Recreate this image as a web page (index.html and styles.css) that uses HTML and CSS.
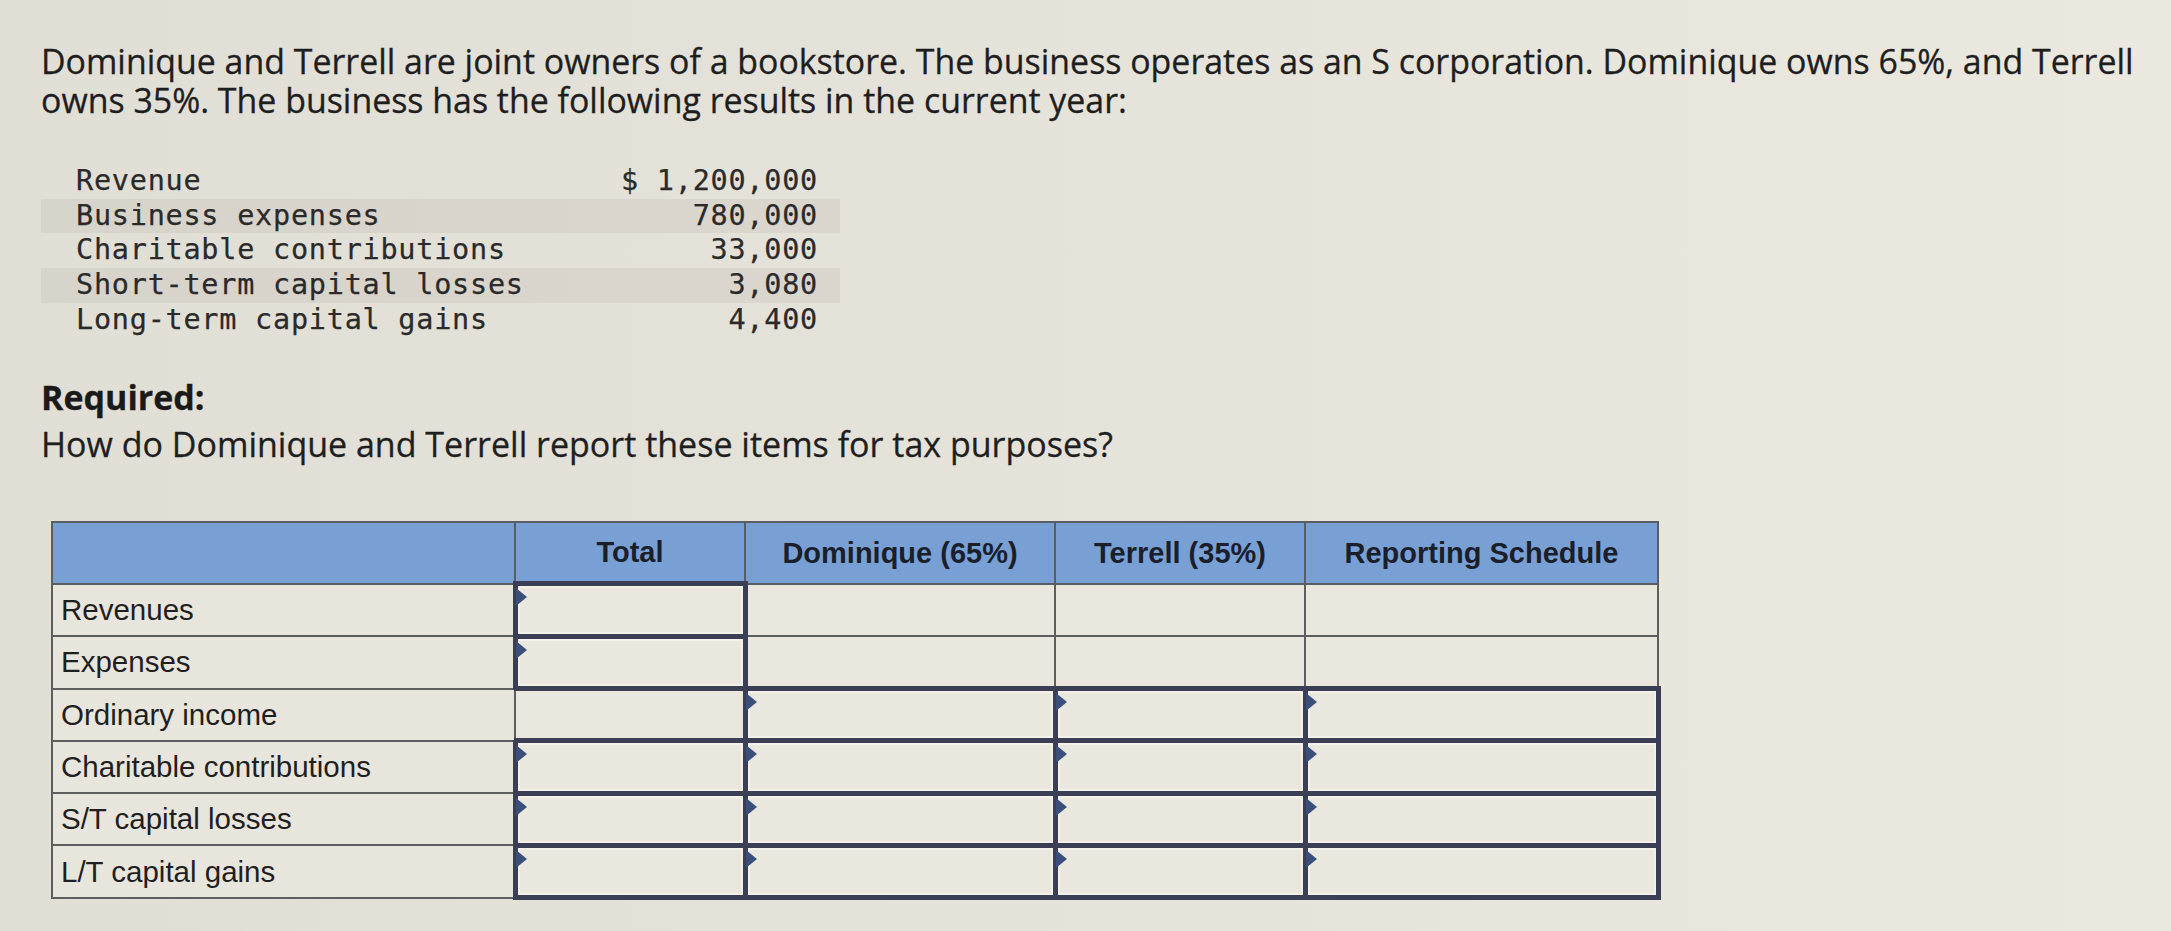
FILE: index.html
```html
<!DOCTYPE html>
<html>
<head>
<meta charset="utf-8">
<link rel="stylesheet" href="styles.css">
</head>
<body>
<div class="page">
  <p class="intro">Dominique and Terrell are joint owners of a bookstore. The business operates as an S corporation. Dominique owns 65%, and Terrell owns 35%. The business has the following results in the current year:</p>

  <div class="data">
    <div class="drow"><span class="dlabel">Revenue</span><span class="dval">$ 1,200,000</span></div>
    <div class="drow stripe"><span class="dlabel">Business expenses</span><span class="dval">780,000</span></div>
    <div class="drow"><span class="dlabel">Charitable contributions</span><span class="dval">33,000</span></div>
    <div class="drow stripe"><span class="dlabel">Short-term capital losses</span><span class="dval">3,080</span></div>
    <div class="drow"><span class="dlabel">Long-term capital gains</span><span class="dval">4,400</span></div>
  </div>

  <div class="required">
    <div class="req-title">Required:</div>
    <div class="req-text">How do Dominique and Terrell report these items for tax purposes?</div>
  </div>

  <table class="answer">
    <colgroup>
      <col class="c-label">
      <col class="c-total">
      <col class="c-dom">
      <col class="c-ter">
      <col class="c-rep">
    </colgroup>
    <thead>
      <tr>
        <th></th>
        <th>Total</th>
        <th>Dominique (65%)</th>
        <th>Terrell (35%)</th>
        <th>Reporting Schedule</th>
      </tr>
    </thead>
    <tbody>
      <tr>
        <td class="label">Revenues</td>
        <td class="in"></td>
        <td></td>
        <td></td>
        <td></td>
      </tr>
      <tr>
        <td class="label">Expenses</td>
        <td class="in"></td>
        <td></td>
        <td></td>
        <td></td>
      </tr>
      <tr>
        <td class="label">Ordinary income</td>
        <td></td>
        <td class="in"></td>
        <td class="in"></td>
        <td class="in"></td>
      </tr>
      <tr>
        <td class="label">Charitable contributions</td>
        <td class="in"></td>
        <td class="in"></td>
        <td class="in"></td>
        <td class="in"></td>
      </tr>
      <tr>
        <td class="label">S/T capital losses</td>
        <td class="in"></td>
        <td class="in"></td>
        <td class="in"></td>
        <td class="in"></td>
      </tr>
      <tr>
        <td class="label">L/T capital gains</td>
        <td class="in"></td>
        <td class="in"></td>
        <td class="in"></td>
        <td class="in"></td>
      </tr>
    </tbody>
  </table>
</div>
</body>
</html>
```

FILE: styles.css
```css
html, body {
  margin: 0;
  padding: 0;
}

body {
  width: 2171px;
  height: 931px;
  overflow: hidden;
  background: linear-gradient(90deg, #e1ded6 0%, #e5e2da 45%, #ebe8e0 100%);
  color: #1f1f1f;
  font-family: "Open Sans", "Liberation Sans", sans-serif;
}

.page {
  padding: 42px 0 0 41px;
}

.intro {
  margin: 0;
  width: 2125px;
  font-size: 33.9px;
  line-height: 39px;
  color: #1e1e1e;
  -webkit-text-stroke: 0.3px #1e1e1e;
}

.data {
  margin-top: 44px;
  width: 799px;
  font-family: "DejaVu Sans Mono", "Liberation Mono", monospace;
  font-size: 28.5px;
  letter-spacing: 0.75px;
  color: #2a2a2a;
  -webkit-text-stroke: 0.25px #2a2a2a;
}

.drow {
  display: flex;
  justify-content: space-between;
  height: 34.7px;
  line-height: 34.7px;
  padding: 0 22px 0 35px;
}

.drow.stripe {
  background: rgba(120, 115, 105, 0.09);
}

.required {
  margin-top: 37px;
  font-size: 34px;
  line-height: 46.5px;
  -webkit-text-stroke: 0.3px #1e1e1e;
}

.req-title {
  font-weight: 700;
  color: #1a1a1a;
}

.req-text {
  color: #1f1f1f;
}

.answer {
  margin: 54px 0 0 10px;
  border-collapse: collapse;
  table-layout: fixed;
  width: 1606px;
  font-family: "Liberation Sans", Arial, sans-serif;
  font-size: 29.5px;
  color: #1f1f1f;
  border: 2px solid #5a5a5a;
}

.c-label { width: 463px; }
.c-total { width: 230px; }
.c-dom { width: 310px; }
.c-ter { width: 250px; }
.c-rep { width: 353px; }

.answer th {
  height: 58px;
  padding: 0;
  background: #79a0d5;
  border: 2px solid #585d66;
  font-weight: 700;
  font-size: 29px;
  text-align: center;
  color: #1a1f2b;
}

.answer td {
  height: 47.3px;
  padding: 0;
  background: #eae7df;
  border: 2px solid #5e5e5e;
  position: relative;
}

.answer td.label {
  padding-left: 8px;
  text-align: left;
  color: #1f1f1f;
  background: #e8e5dd;
}

.answer td.in {
  border: 5px solid #3b3f55;
  box-shadow: inset 0 0 0 2px #f3f1ea;
}

.answer td.in::before {
  content: "";
  position: absolute;
  left: -2px;
  top: 2px;
  border-style: solid;
  border-width: 9px 0 9px 11px;
  border-color: transparent transparent transparent #3a4f7c;
}
```
